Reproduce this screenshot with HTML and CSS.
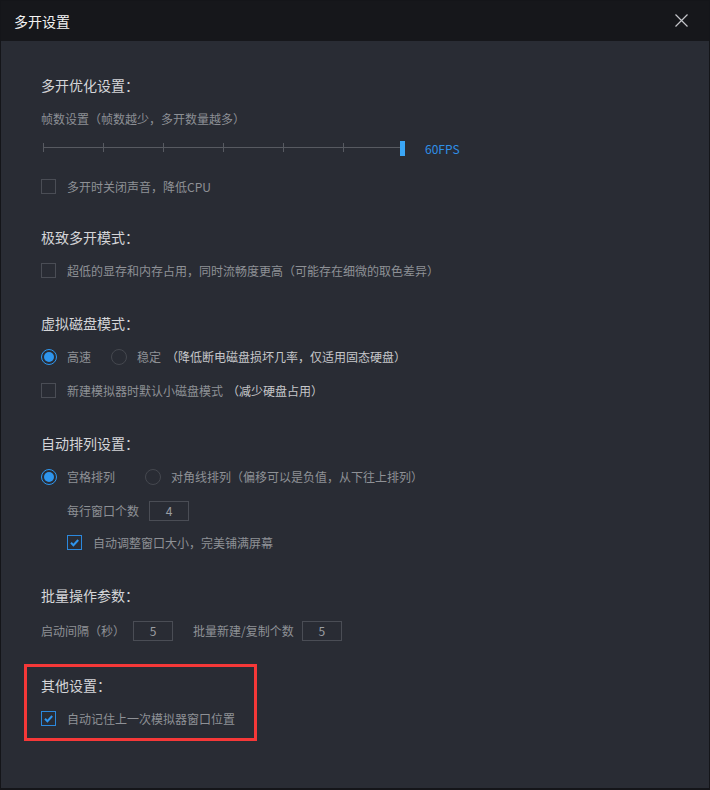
FILE: index.html
```html
<!DOCTYPE html>
<html lang="zh-CN">
<head>
<meta charset="utf-8">
<title>多开设置</title>
<link rel="stylesheet" href="styles.css">
</head>
<body>
<div class="window">
  <div class="titlebar">
    <span class="title">多开设置</span>
    <svg class="close" width="13" height="13" viewBox="0 0 13 13"><path d="M0.5 0.5L12.5 12.5M12.5 0.5L0.5 12.5" stroke="#c4c6ca" stroke-width="1.2" fill="none"/></svg>
  </div>
  <div class="content">
    <div class="heading h-first">多开优化设置：</div>
    <div class="desc">帧数设置（帧数越少，多开数量越多）</div>
    <div class="slider-row">
      <div class="track">
        <span class="tick"></span><span class="tick"></span><span class="tick"></span><span class="tick"></span><span class="tick"></span><span class="tick"></span>
        <span class="handle"></span>
      </div>
      <span class="fps">60FPS</span>
    </div>
    <div class="row check-row gap-20">
      <span class="box"></span><span class="label">多开时关闭声音，降低CPU</span>
    </div>

    <div class="heading h-sec">极致多开模式：</div>
    <div class="row check-row gap-13">
      <span class="box"></span><span class="label">超低的显存和内存占用，同时流畅度更高（可能存在细微的取色差异）</span>
    </div>

    <div class="heading h-sec2">虚拟磁盘模式：</div>
    <div class="row radio-row gap-14">
      <span class="radio on"></span><span class="label">高速</span>
      <span class="radio r-gap20"></span><span class="label">稳定</span>
      <span class="note note-disk">（降低断电磁盘损坏几率，仅适用固态硬盘）</span>
    </div>
    <div class="row check-row gap-13">
      <span class="box"></span><span class="label">新建模拟器时默认小磁盘模式</span>
      <span class="note note-small">（减少硬盘占用）</span>
    </div>

    <div class="heading h-sec2">自动排列设置：</div>
    <div class="row radio-row gap-14">
      <span class="radio on"></span><span class="label">宫格排列</span>
      <span class="radio r-gap30"></span><span class="label">对角线排列（偏移可以是负值，从下往上排列）</span>
    </div>
    <div class="row input-row indent gap-14">
      <span class="label">每行窗口个数</span>
      <span class="num num-wide">4</span>
    </div>
    <div class="row check-row indent gap-11">
      <span class="box checked"><svg width="13" height="13" viewBox="0 0 13 13"><path d="M3 6.8L5.4 9.2L10.2 4" stroke="#2f95ee" stroke-width="2" fill="none"/></svg></span><span class="label">自动调整窗口大小，完美铺满屏幕</span>
    </div>

    <div class="heading h-sec2">批量操作参数：</div>
    <div class="row input-row gap-16">
      <span class="label">启动间隔（秒）</span>
      <span class="num">5</span>
      <span class="label label-gap">批量新建/复制个数</span>
      <span class="num">5</span>
    </div>

    <div class="others">
      <div class="heading">其他设置：</div>
      <div class="row check-row gap-13">
        <span class="box checked"><svg width="13" height="13" viewBox="0 0 13 13"><path d="M3 6.8L5.4 9.2L10.2 4" stroke="#2f95ee" stroke-width="2" fill="none"/></svg></span><span class="label">自动记住上一次模拟器窗口位置</span>
      </div>
    </div>
  </div>
</div>
</body>
</html>
```

FILE: styles.css
```css
* { box-sizing: border-box; }
html, body { margin: 0; padding: 0; background: #292c34; }
body {
  font-family: "Noto Sans CJK SC", "Noto Sans", sans-serif;
  font-size: 12px;
}
.window {
  width: 710px;
  height: 790px;
  background: #292c34;
  border: 1px solid #141519;
  border-bottom-width: 2px;
  overflow: hidden;
}
.titlebar {
  height: 40px;
  background: #16171b;
  display: flex;
  align-items: center;
  justify-content: space-between;
  padding: 0 21px 0 13px;
}
.title {
  color: #f2f2f2;
  font-size: 14px;
  line-height: 20px;
}
.close { display: block; margin-top: -2px; }
.content {
  padding-left: 40px;
}
.heading {
  height: 20px;
  line-height: 20px;
  font-size: 14px;
  color: #d4d5d8;
}
.h-first { margin-top: 34px; }
.h-sec { margin-top: 30px; }
.h-sec2 { margin-top: 32px; }
.desc {
  margin-top: 14px;
  height: 20px;
  line-height: 20px;
  color: #8c8f95;
}
.slider-row {
  margin-top: 12px;
  height: 15px;
  display: flex;
  align-items: center;
  padding-left: 2px;
}
.track {
  position: relative;
  width: 362px;
  height: 15px;
  display: flex;
  align-items: center;
  background: linear-gradient(#575a61, #575a61) no-repeat 0 6px / 358px 1px;
}
.tick {
  width: 60px;
  height: 9px;
  border-left: 1px solid #575a61;
  margin-top: -2px;
}
.handle {
  position: absolute;
  right: 0;
  top: 0;
  width: 5px;
  height: 15px;
  background: #3aa6f6;
}
.fps {
  margin-left: 20px;
  color: #2f8fe6;
  font-size: 12px;
  line-height: 15px;
}
.row {
  display: flex;
  align-items: center;
  white-space: nowrap;
}
.check-row { height: 21px; }
.radio-row { height: 20px; }
.input-row { height: 20px; }
.gap-11 { margin-top: 11px; }
.gap-13 { margin-top: 13px; }
.gap-14 { margin-top: 14px; }
.gap-16 { margin-top: 16px; }
.gap-20 { margin-top: 20px; }
.indent { padding-left: 26px; }
.label {
  color: #8e9196;
  line-height: 20px;
}
.box {
  width: 15px;
  height: 15px;
  border: 1px solid #4a4d55;
  margin-right: 11px;
  flex: none;
  display: flex;
  align-items: center;
  justify-content: center;
}
.box.checked { border-color: #2b88dd; }
.box svg { display: block; }
.radio {
  width: 16px;
  height: 16px;
  border-radius: 50%;
  border: 1px solid #45484f;
  margin-right: 10px;
  flex: none;
}
.radio.on {
  border: 1.5px solid #2e96ee;
  padding: 2px;
  background: #2e96ee;
  background-clip: content-box;
}
.r-gap20 { margin-left: 20px; }
.r-gap30 { margin-left: 30px; }
.note {
  color: #c6c7ca;
  line-height: 20px;
}
.note-disk { margin-left: 5px; }
.note-small { margin-left: 4px; }
.num {
  width: 40px;
  height: 20px;
  border: 1px solid #4a4d55;
  margin-left: 8px;
  color: #9a9da2;
  text-align: center;
  line-height: 18px;
  font-size: 12px;
}
.num-wide { margin-left: 10px; }
.label-gap { margin-left: 20px; }
.others {
  margin-top: 23px;
  margin-left: -17px;
  width: 233px;
  border: 3px solid #f53838;
  padding: 8px 14px 9px;
}
```
